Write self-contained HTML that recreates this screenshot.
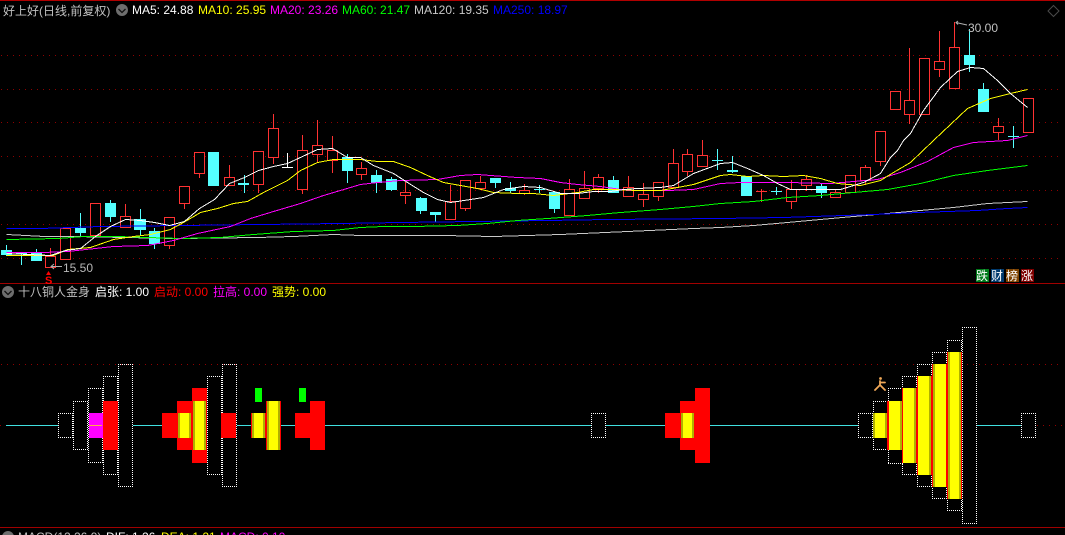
<!DOCTYPE html>
<html lang="zh">
<head>
<meta charset="utf-8">
<title>好上好</title>
<style>
html,body{margin:0;padding:0;background:#000;width:1065px;height:535px;overflow:hidden}
svg{display:block;position:absolute;left:0;top:0}
text{font-family:"Liberation Sans","Noto Sans CJK SC",sans-serif;font-size:12px}
.w{stroke:#ff3232;stroke-width:1;fill:none}
.wc{stroke:#54ffff;stroke-width:1;fill:none}
.r{stroke:#ff3232;stroke-width:1;fill:#000}
.c{fill:#54ffff;stroke:none}
.g{stroke:#900000;stroke-width:1;stroke-dasharray:1 5;fill:none}
.m{fill:none;stroke-width:1}
.b{fill:none;stroke:#fff;stroke-width:1;stroke-dasharray:1 1}
</style>
</head>
<body>
<svg width="1065" height="535" viewBox="0 0 1065 535" xmlns="http://www.w3.org/2000/svg">
<rect width="1065" height="535" fill="#000"/>
<g shape-rendering="crispEdges">
<rect x="0" y="0" width="1065" height="1" fill="#b00000"/>
<rect x="0" y="283" width="1065" height="1" fill="#a00000"/>
<rect x="0" y="527" width="1065" height="1" fill="#a00000"/>
<path class="g" d="M1 55.5H1062M1 89.5H1062M1 122.5H1062M1 156.5H1062M1 190.5H1062M1 224.5H1062M1 258.5H1062M1 364.5H1062M0 425.5H6M1037 425.5H1062"/>

<path class="wc" d="M6.5 245V256M21.5 252V265M36.5 249V261M80.5 213V237M110.5 200V222M140.5 209V235M154.5 228V249M214.5 152V186M244.5 175V193M347.5 154V183M376.5 170V193M391.5 177V191M420.5 197V214M435.5 212V222M495.5 178V188M510.5 182V193M539.5 185V193M554.5 191V213M613.5 176V193M717.5 149V170M732.5 156V173M747.5 176V196M776.5 187V195M821.5 184V198M969.5 29V72M983.5 83V112M1013.5 126V148"/>
<path stroke="#fff" fill="none" d="M287.5 153V168M282 167.5H293"/>
<path class="w" d="M50.5 248V267M65.5 228V259M95.5 203V235M125.5 204V227M169.5 217V249M184.5 186V209M199.5 152V178M229.5 165V185M258.5 151V193M273.5 114V164M302.5 135V194M317.5 120V163M332.5 136V173M361.5 162V180M405.5 182V204M450.5 185V219M465.5 180V211M480.5 176V190M524.5 184V195M569.5 179V215M584.5 171V199M598.5 174V193M628.5 176V196M643.5 183V207M658.5 182V201M673.5 149V187M687.5 149V176M702.5 140V166M761.5 189V202M791.5 180V209M806.5 175V191M835.5 190V197M850.5 175V193M865.5 165V185M880.5 131V166M895.5 91V110M909.5 48V124M924.5 58V114M939.5 31V77M954.5 22V88M998.5 118V140M1028.5 98V132M756 191.5H767"/>

<rect class="r" x="45.5" y="256.5" width="10" height="11"/>
<rect class="r" x="60.5" y="228.5" width="10" height="31"/>
<rect class="r" x="90.5" y="203.5" width="10" height="32"/>
<rect class="r" x="120.5" y="216.5" width="10" height="11"/>
<rect class="r" x="164.5" y="217.5" width="10" height="28"/>
<rect class="r" x="179.5" y="186.5" width="10" height="17"/>
<rect class="r" x="194.5" y="152.5" width="10" height="21"/>
<rect class="r" x="224.5" y="177.5" width="10" height="8"/>
<rect class="r" x="253.5" y="151.5" width="10" height="33"/>
<rect class="r" x="268.5" y="128.5" width="10" height="29"/>
<rect class="r" x="297.5" y="150.5" width="10" height="39"/>
<rect class="r" x="312.5" y="145.5" width="10" height="9"/>
<rect class="r" x="327.5" y="150.5" width="10" height="10"/>
<rect class="r" x="356.5" y="168.5" width="10" height="6"/>
<rect class="r" x="400.5" y="192.5" width="10" height="3"/>
<rect class="r" x="445.5" y="201.5" width="10" height="18"/>
<rect class="r" x="460.5" y="180.5" width="10" height="28"/>
<rect class="r" x="475.5" y="182.5" width="10" height="6"/>
<rect class="r" x="519.5" y="190.5" width="10" height="3"/>
<rect class="r" x="564.5" y="189.5" width="10" height="26"/>
<rect class="r" x="579.5" y="188.5" width="10" height="10"/>
<rect class="r" x="593.5" y="177.5" width="10" height="11"/>
<rect class="r" x="623.5" y="187.5" width="10" height="9"/>
<rect class="r" x="638.5" y="194.5" width="10" height="5"/>
<rect class="r" x="653.5" y="182.5" width="10" height="14"/>
<rect class="r" x="668.5" y="163.5" width="10" height="24"/>
<rect class="r" x="682.5" y="154.5" width="10" height="17"/>
<rect class="r" x="697.5" y="155.5" width="10" height="11"/>
<rect class="r" x="786.5" y="189.5" width="10" height="12"/>
<rect class="r" x="801.5" y="179.5" width="10" height="6"/>
<rect class="r" x="830.5" y="192.5" width="10" height="5"/>
<rect class="r" x="845.5" y="175.5" width="10" height="17"/>
<rect class="r" x="860.5" y="167.5" width="10" height="13"/>
<rect class="r" x="875.5" y="131.5" width="10" height="30"/>
<rect class="r" x="890.5" y="91.5" width="10" height="18"/>
<rect class="r" x="904.5" y="100.5" width="10" height="14"/>
<rect class="r" x="919.5" y="58.5" width="10" height="56"/>
<rect class="r" x="934.5" y="61.5" width="10" height="8"/>
<rect class="r" x="949.5" y="47.5" width="10" height="41"/>
<rect class="r" x="993.5" y="126.5" width="10" height="6"/>
<rect class="r" x="1023.5" y="98.5" width="10" height="34"/>

<rect class="c" x="1" y="250" width="11" height="5"/>
<rect class="c" x="16" y="253" width="11" height="1"/>
<rect class="c" x="31" y="253" width="11" height="8"/>
<rect class="c" x="75" y="228" width="11" height="5"/>
<rect class="c" x="105" y="203" width="11" height="14"/>
<rect class="c" x="134" y="219" width="12" height="11"/>
<rect class="c" x="149" y="231" width="11" height="13"/>
<rect class="c" x="208" y="152" width="11" height="34"/>
<rect class="c" x="238" y="183" width="11" height="2"/>
<rect class="c" x="342" y="157" width="11" height="14"/>
<rect class="c" x="371" y="175" width="11" height="8"/>
<rect class="c" x="386" y="179" width="11" height="11"/>
<rect class="c" x="416" y="198" width="11" height="13"/>
<rect class="c" x="430" y="212" width="11" height="3"/>
<rect class="c" x="490" y="178" width="11" height="5"/>
<rect class="c" x="505" y="188" width="11" height="3"/>
<rect class="c" x="534" y="189" width="11" height="1"/>
<rect class="c" x="549" y="192" width="11" height="17"/>
<rect class="c" x="608" y="180" width="11" height="13"/>
<rect class="c" x="712" y="160" width="11" height="1"/>
<rect class="c" x="727" y="170" width="11" height="2"/>
<rect class="c" x="741" y="176" width="11" height="20"/>
<rect class="c" x="771" y="191" width="11" height="1"/>
<rect class="c" x="816" y="186" width="11" height="7"/>
<rect class="c" x="964" y="55" width="11" height="10"/>
<rect class="c" x="978" y="89" width="11" height="23"/>
<rect class="c" x="1008" y="136" width="11" height="1"/>

<g transform="translate(.5 .5)">
<polyline class="m" stroke="#c8c8c8" points="6,234 44,236 73,236 177,238 257,237 293,236 333,234 360,235 443,235 493,236 560,234 627,231 693,228 720,227 753,225 787,222 853,216 887,213 953,207 987,203 1027,201"/>
<polyline class="m" stroke="#0000ff" points="6,228 40,228 100,226 340,223 400,222 473,221 547,220 607,219 720,218 783,217 843,215 873,214 917,212 977,210 1007,208 1027,207"/>
<polyline class="m" stroke="#00ff00" points="6,239 58,238 83,236 117,236 147,237 180,238 220,237 253,234 293,231 333,230 360,227 383,226 413,226 457,225 487,223 517,220 547,218 587,215 620,212 660,209 693,206 720,203 753,201 787,197 820,195 853,192 887,189 920,183 953,175 987,170 1027,165"/>
<polyline class="m" stroke="#ff00ff" points="6,252 43,252 67,251 113,246 147,245 173,240 197,233 230,226 250,218 273,211 300,203 323,195 360,184 377,182 400,180 437,179 460,175 477,174 517,177 540,178 560,182 577,184 600,186 627,190 667,190 693,189 720,183 740,182 787,182 830,183 853,181 877,179 900,172 927,161 953,147 973,142 1007,140 1027,135"/>
<polyline class="m" stroke="#ffff00" points="6,255 53,255 67,249 90,247 113,239 133,236 150,234 170,229 183,222 200,212 217,208 233,203 247,201 263,192 287,180 300,170 317,162 333,159 360,159 377,161 393,161 410,167 427,175 443,182 460,185 477,188 493,192 517,193 533,193 553,195 577,192 593,189 613,189 637,190 660,190 677,187 693,184 720,175 730,174 747,176 763,175 783,176 803,175 820,178 837,183 860,185 880,180 893,172 910,162 933,140 950,124 967,108 990,98 1010,93 1027,89"/>
<polyline class="m" stroke="#ffffff" points="6,253 50,255 65,250 80,248 95,236 110,226 125,219 140,220 154,222 169,225 184,221 199,208 214,199 229,183 244,177 258,170 273,166 287,163 302,156 317,149 332,148 347,157 360,157 373,165 393,173 407,182 423,192 437,199 450,202 470,199 483,197 503,189 523,186 540,187 560,193 577,193 593,191 610,191 623,189 637,188 660,187 673,185 693,173 720,163 732,162 747,168 763,175 777,183 790,189 820,189 840,189 863,182 880,173 890,157 897,150 903,140 910,133 923,110 940,87 957,71 970,67 983,68 997,80 1010,93 1027,107"/>
</g>

<path stroke="#40e0e0" fill="none" d="M6 425.5H58M133 425.5H162M237 425.5H251M281 425.5H295M325 425.5H591M606 425.5H665M710 425.5H858M977 425.5H1021"/>

<path class="b" d="M58 413.5H73M58 437.5H73M58.5 413V438M72.5 413V438M73 401.5H88M73 449.5H88M73.5 401V450M87.5 401V450M88 388.5H103M88 462.5H103M88.5 388V463M102.5 388V463M103 376.5H118M103 474.5H118M103.5 376V475M117.5 376V475M118 364.5H133M118 486.5H133M118.5 364V487M132.5 364V487M207 376.5H222M207 474.5H222M207.5 376V475M221.5 376V475M222 364.5H237M222 486.5H237M222.5 364V487M236.5 364V487M591 413.5H606M591 437.5H606M591.5 413V438M605.5 413V438M858 413.5H873M858 437.5H873M858.5 413V438M872.5 413V438M873 401.5H888M873 449.5H888M873.5 401V450M887.5 401V450M888 388.5H903M888 463.5H903M888.5 388V464M902.5 388V464M902 376.5H917M902 474.5H917M902.5 376V475M916.5 376V475M917 364.5H932M917 486.5H932M917.5 364V487M931.5 364V487M932 352.5H947M932 498.5H947M932.5 352V499M946.5 352V499M947 340.5H962M947 510.5H962M947.5 340V511M961.5 340V511M962 327.5H977M962 523.5H977M962.5 327V524M976.5 327V524M1021 413.5H1036M1021 437.5H1036M1021.5 413V438M1035.5 413V438"/>

<rect x="89" y="413" width="14" height="25" fill="#ff00ff"/>
<rect x="89" y="425" width="13" height="1" fill="#ffb040"/>
<rect x="103" y="401" width="15" height="49" fill="#ff0000"/>

<rect x="162" y="413" width="15" height="25" fill="#ff0000"/>
<rect x="177" y="401" width="15" height="49" fill="#ff0000"/>
<rect x="178" y="413" width="13" height="25" fill="#b0b000"/>
<rect x="180" y="413" width="9" height="25" fill="#ffff00"/>
<rect x="192" y="388" width="15" height="75" fill="#ff0000"/>
<rect x="193" y="401" width="13" height="49" fill="#b0b000"/>
<rect x="195" y="401" width="9" height="49" fill="#ffff00"/>
<rect x="221" y="413" width="15" height="25" fill="#ff0000"/>

<rect x="251" y="413" width="15" height="25" fill="#ff0000"/>
<rect x="252" y="413" width="13" height="25" fill="#b0b000"/>
<rect x="254" y="413" width="9" height="25" fill="#ffff00"/>
<rect x="266" y="401" width="15" height="49" fill="#ff0000"/>
<rect x="267" y="401" width="13" height="49" fill="#b0b000"/>
<rect x="269" y="401" width="9" height="49" fill="#ffff00"/>
<rect x="255" y="388" width="7" height="14" fill="#00ff00"/>
<rect x="299" y="388" width="7" height="14" fill="#00ff00"/>
<rect x="295" y="413" width="15" height="25" fill="#ff0000"/>
<rect x="310" y="401" width="15" height="49" fill="#ff0000"/>

<rect x="665" y="413" width="15" height="25" fill="#ff0000"/>
<rect x="680" y="401" width="15" height="49" fill="#ff0000"/>
<rect x="681" y="413" width="13" height="25" fill="#b0b000"/>
<rect x="683" y="413" width="9" height="25" fill="#ffff00"/>
<rect x="695" y="388" width="15" height="75" fill="#ff0000"/>

<rect x="873" y="413" width="14" height="25" fill="#b0b000"/>
<rect x="875" y="413" width="10" height="25" fill="#ffff00"/>
<rect x="887" y="401" width="15" height="49" fill="#ff0000"/>
<rect x="889" y="401" width="13" height="49" fill="#b0b000"/>
<rect x="889" y="401" width="11" height="49" fill="#ffff00"/>
<rect x="902" y="388" width="15" height="75" fill="#ff0000"/>
<rect x="903" y="388" width="13" height="75" fill="#b0b000"/>
<rect x="903" y="388" width="11" height="75" fill="#ffff00"/>
<rect x="917" y="376" width="15" height="99" fill="#ff0000"/>
<rect x="918" y="376" width="13" height="99" fill="#b0b000"/>
<rect x="918" y="376" width="11" height="99" fill="#ffff00"/>
<rect x="932" y="364" width="15" height="123" fill="#ff0000"/>
<rect x="933" y="364" width="13" height="123" fill="#b0b000"/>
<rect x="935" y="364" width="11" height="123" fill="#ffff00"/>
<rect x="947" y="352" width="15" height="147" fill="#ff0000"/>
<rect x="948" y="352" width="13" height="147" fill="#b0b000"/>
<rect x="950" y="352" width="9" height="147" fill="#ffff00"/>
</g>

<g fill="none" stroke="#f0a858" stroke-width="1.8" stroke-linecap="round" stroke-linejoin="round">
<circle cx="880.5" cy="378.5" r="1.4" fill="#f0a858" stroke="none"/>
<path d="M880 381L880 385L875 390M880 385L885 390M880 382.5L885 382.5"/>
</g>

<path d="M62 266.5H51M54 264L51 266.5L54 269" stroke="#b0b0b0" fill="none"/>
<text x="63" y="272" fill="#b8b8b8">15.50</text>
<path d="M48.5 271L46 275H51Z" fill="#ff0000"/>
<text x="45" y="284" fill="#ff0000" font-weight="bold" style="font-size:11px">S</text>
<path d="M967 25L956 22.5M958 21L956 22.5L958 24.5" stroke="#b0b0b0" fill="none"/>
<text x="968" y="32" fill="#c0c0c0">30.00</text>

<text x="3" y="15" fill="#c0c0c0">好上好(日线,前复权)</text>
<circle cx="122" cy="10" r="6" fill="#6e6e6e"/>
<path d="M118.5 9L122 12.5L125.5 9" stroke="#111" stroke-width="1.3" fill="none"/>
<text x="132" y="14" fill="#ffffff">MA5: 24.88</text>
<text x="198" y="14" fill="#ffff00">MA10: 25.95</text>
<text x="270" y="14" fill="#ff00ff">MA20: 23.26</text>
<text x="342" y="14" fill="#00ff00">MA60: 21.47</text>
<text x="414" y="14" fill="#c8c8c8">MA120: 19.35</text>
<text x="493" y="14" fill="#0000ff">MA250: 18.97</text>

<path d="M1053.5 5.5L1059 11L1053.5 16.5L1048 11Z" fill="none" stroke="#4a4a4a"/>

<circle cx="8" cy="292" r="6" fill="#6e6e6e"/>
<path d="M4.5 291L8 294.5L11.500 291" stroke="#111" stroke-width="1.3" fill="none"/>
<text x="18" y="296" fill="#c0c0c0">十八铜人金身</text>
<text x="95" y="296" fill="#ffffff">启张: 1.00</text>
<text x="154" y="296" fill="#ff0000">启动: 0.00</text>
<text x="213" y="296" fill="#ff00ff">拉高: 0.00</text>
<text x="272" y="296" fill="#ffff00">强势: 0.00</text>

<circle cx="8" cy="537" r="6" fill="#6e6e6e"/>
<text x="18" y="541" fill="#c0c0c0">MACD(12,26,9)</text>
<text x="106" y="541" fill="#ffffff">DIF: 1.26</text>
<text x="161" y="541" fill="#ffff00">DEA: 1.21</text>
<text x="220" y="541" fill="#ff00ff">MACD: 0.10</text>

<g shape-rendering="crispEdges">
<rect x="976" y="269" width="13" height="13" fill="#007a1a"/>
<rect x="991" y="269" width="13" height="13" fill="#003a6e"/>
<rect x="1006" y="269" width="13" height="13" fill="#7e4200"/>
<rect x="1021" y="269" width="13" height="13" fill="#7e0000"/>
</g>
<text x="976" y="280" fill="#fff">跌</text>
<text x="991" y="280" fill="#fff">财</text>
<text x="1006" y="280" fill="#fff">榜</text>
<text x="1021" y="280" fill="#fff">涨</text>
</svg>
</body>
</html>
